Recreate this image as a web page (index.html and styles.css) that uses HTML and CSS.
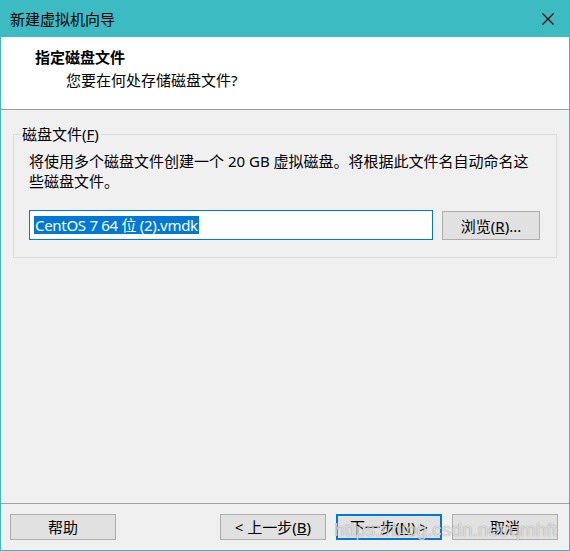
FILE: index.html
```html
<!DOCTYPE html>
<html lang="zh-CN">
<head>
    <meta charset="UTF-8">
    <meta name="viewport" content="width=device-width, initial-scale=1.0">
    <title>新建虚拟机向导</title>
    <link rel="stylesheet" href="styles.css">
</head>
<body>
    <div class="wizard-window">
        <div class="title-bar">
            <span class="title-text">新建虚拟机向导</span>
            <svg class="close-icon" width="12" height="12" viewBox="0 0 12 12">
                <path d="M0.5 0.5 L11.5 11.5 M11.5 0.5 L0.5 11.5" stroke="#000" stroke-width="1.1" fill="none"/>
            </svg>
        </div>

        <div class="wizard-header">
            <h1>指定磁盘文件</h1>
            <p>您要在何处存储磁盘文件?</p>
        </div>

        <div class="wizard-body">
            <div class="group-box">
                <span class="group-title">磁盘文件(<u>F</u>)</span>
                <p class="group-text">
                    <span>将使用多个磁盘文件创建一个 20 GB 虚拟磁盘。将根据此文件名自动命名这</span>
                    <span>些磁盘文件。</span>
                </p>
                <div class="file-row">
                    <div class="file-input">
                        <span class="selected">CentOS 7 64 位 (2).vmdk</span>
                    </div>
                    <button type="button" class="btn browse-btn">浏览(<u>R</u>)...</button>
                </div>
            </div>
        </div>

        <div class="wizard-footer">
            <button type="button" class="btn">帮助</button>
            <div class="nav-buttons">
                <button type="button" class="btn">&lt; 上一步(<u>B</u>)</button>
                <button type="button" class="btn default-btn">下一步(<u>N</u>) &gt;</button>
                <button type="button" class="btn">取消</button>
            </div>
        </div>

        <div class="watermark">https://blog.csdn.net/qmhft</div>
    </div>
</body>
</html>
```

FILE: styles.css
```css
:root {
    --teal: #3dbbc3;
    --panel: #f0f0f0;
    --line: #a0a0a0;
    --group-line: #dcdcdc;
    --accent: #0078d7;
    --btn-face: #e1e1e1;
    --btn-line: #adadad;
}

* {
    margin: 0;
    padding: 0;
    box-sizing: border-box;
}

body {
    width: 570px;
    height: 551px;
    font-family: "Noto Sans", "Noto Sans CJK SC", sans-serif;
    font-size: 15px;
    color: #000;
    background: var(--panel);
    overflow: hidden;
}

.wizard-window {
    position: relative;
    height: 551px;
    display: flex;
    flex-direction: column;
    border: 1px solid var(--teal);
    border-top: 0;
    background: var(--panel);
}

/* title bar */
.title-bar {
    height: 37px;
    margin: 0 -1px;
    background: var(--teal);
    display: flex;
    align-items: center;
    justify-content: space-between;
    padding: 0 16px 0 10px;
}

.title-text {
    line-height: 20px;
}

.close-icon {
    display: block;
}

/* header */
.wizard-header {
    height: 73px;
    background: #fff;
    border-bottom: 1px solid var(--line);
    padding-top: 10px;
}

.wizard-header h1 {
    font-size: 15px;
    font-weight: 700;
    line-height: 20px;
    padding-left: 34px;
}

.wizard-header p {
    line-height: 20px;
    margin-top: 3px;
    padding-left: 65px;
}

/* body */
.wizard-body {
    flex: 1;
    padding: 24px 12px 0;
}

.group-box {
    position: relative;
    border: 1px solid var(--group-line);
    padding: 16px 16px 17px 15px;
}

.group-title {
    position: absolute;
    top: -11px;
    left: 6px;
    padding: 0 2px;
    line-height: 20px;
    background: var(--panel);
}

.group-text {
    line-height: 20px;
}

.group-text span {
    display: block;
    white-space: nowrap;
}

.file-row {
    display: flex;
    align-items: flex-start;
    gap: 9px;
    margin-top: 19px;
}

.file-input {
    width: 404px;
    height: 30px;
    background: #fff;
    border: 1px solid var(--accent);
    padding: 4px 0 0 4px;
}

.selected {
    display: inline-block;
    line-height: 18px;
    padding: 0 1px;
    background: var(--accent);
    color: #fff;
    white-space: nowrap;
    letter-spacing: -0.3px;
}

/* buttons */
.btn {
    width: 106px;
    height: 26px;
    font-family: inherit;
    font-size: 15px;
    line-height: 20px;
    color: #000;
    background: var(--btn-face);
    border: 1px solid var(--btn-line);
    display: flex;
    align-items: center;
    justify-content: center;
}

.browse-btn {
    width: 98px;
    height: 29px;
    margin-top: 1px;
}

.default-btn {
    border: 2px solid var(--accent);
}

/* footer */
.wizard-footer {
    height: 47px;
    border-top: 1px solid var(--line);
    padding: 10px 11px 0 9px;
    display: flex;
    justify-content: space-between;
    align-items: flex-start;
}

.nav-buttons {
    display: flex;
    gap: 10px;
}

.watermark {
    position: absolute;
    right: 12px;
    bottom: 9px;
    font-family: "Liberation Sans", Arial, sans-serif;
    font-size: 19px;
    line-height: 22px;
    color: rgba(255, 255, 255, 0.7);
    text-shadow: 0 0 1px rgba(0, 0, 0, 0.45);
    pointer-events: none;
}
```
